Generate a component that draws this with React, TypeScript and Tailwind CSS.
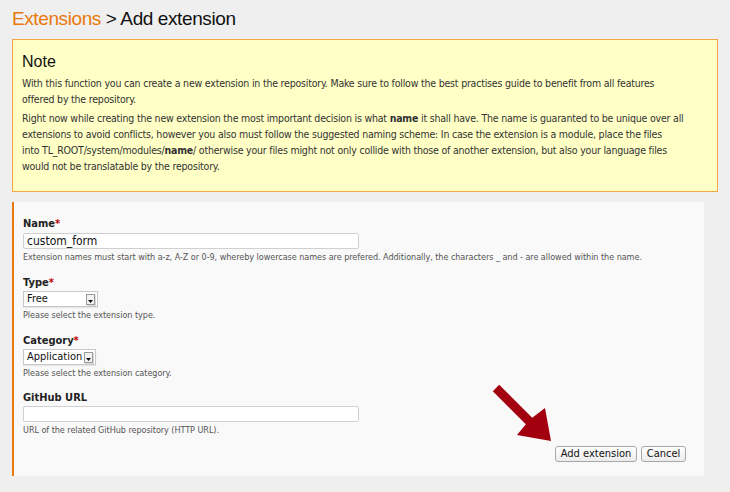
import React from 'react';

const Req = () => <span className="text-[#c00000]">*</span>;

const FakeSelect: React.FC<{ value: string; width: string }> = ({ value, width }) => (
  <div className={`${width} h-[16px] flex items-center justify-between bg-white border border-[#c9c9c9] shadow-[0_1px_1px_rgba(0,0,0,0.08)] pl-[3px] pr-[2px] text-[11px] leading-[14px] text-[#111]`}>
    <span>{value}</span>
    <span className="w-[9px] h-[11px] flex items-end justify-center border border-[#9a9a9a] bg-[#f2f2f2] pb-[1px] shadow-[1px_1px_0_rgba(0,0,0,0.15)]">
      <svg width="5" height="3" viewBox="0 0 5 3"><path d="M0 0h5L2.5 3z" fill="#111" /></svg>
    </span>
  </div>
);

const Label: React.FC<{ className?: string; children: React.ReactNode }> = ({ className = '', children }) => (
  <div className={`text-[11px] leading-[14px] font-bold text-[#222] ${className}`}>{children}</div>
);

const Hint: React.FC<{ children: React.ReactNode }> = ({ children }) => (
  <p className="mt-[1px] text-[9px] leading-[14px] tracking-[-0.05px] text-[#555] whitespace-nowrap">{children}</p>
);

export default function App() {
  return (
    <div className="w-[730px] h-[492px] overflow-hidden bg-[#efefef] text-[#333] [font-family:'DejaVu_Sans',sans-serif] [font-stretch:condensed]">
      <h1 className="pl-[12px] pt-[7px] h-[39px] text-[19px] leading-[24px] tracking-[-0.4px] [font-family:'Liberation_Sans',sans-serif] [font-stretch:normal] text-[#111]">
        <span className="text-[#e8790c]">Extensions</span> &gt; Add extension
      </h1>

      <div className="ml-[12px] w-[706px] h-[153px] border border-[#f2a742] bg-[#ffffc6] pl-[9px] pr-[9px] pt-[12px]">
        <h2 className="text-[16px] leading-[20px] text-[#111] mb-[3px] [font-family:'Liberation_Sans',sans-serif] [font-stretch:normal]">Note</h2>
        <p className="text-[10.5px] leading-[16px] tracking-[-0.2px] mb-[3px] whitespace-nowrap">
          With this function you can create a new extension in the repository. Make sure to follow the best practises guide to benefit from all features
          <br />
          offered by the repository.
        </p>
        <p className="text-[10.5px] leading-[16px] tracking-[-0.2px] whitespace-nowrap">
          Right now while creating the new extension the most important decision is what <b>name</b> it shall have. The name is guaranted to be unique over all
          <br />
          extensions to avoid conflicts, however you also must follow the suggested naming scheme: In case the extension is a module, place the files
          <br />
          into TL_ROOT/system/modules/<b>name</b>/ otherwise your files might not only collide with those of another extension, but also your language files
          <br />
          would not be translatable by the repository.
        </p>
      </div>

      <div className="relative mt-[10px] ml-[12px] w-[692px] h-[274px] bg-[#f9f9f9] border-l-2 border-[#e8790c] pl-[9px] pr-[9px] pt-[15px]">
        <Label>Name<Req /></Label>
        <div className="mt-[2px] w-[336px] h-[16px] bg-white border border-[#d0d0d0] rounded-[2px] px-[3px] text-[12px] leading-[14px] text-[#111]">custom_form</div>
        <Hint>Extension names must start with a-z, A-Z or 0-9, whereby lowercase names are prefered. Additionally, the characters _ and - are allowed within the name.</Hint>

        <Label className="mt-[12px]">Type<Req /></Label>
        <div className="mt-[1px]"><FakeSelect value="Free" width="w-[75px]" /></div>
        <Hint>Please select the extension type.</Hint>

        <Label className="mt-[12px]">Category<Req /></Label>
        <div className="mt-[1px]"><FakeSelect value="Application" width="w-[73px]" /></div>
        <Hint>Please select the extension category.</Hint>

        <Label className="mt-[11px]">GitHub URL</Label>
        <div className="mt-[1px] w-[336px] h-[16px] bg-white border border-[#d0d0d0] rounded-[2px]" />
        <Hint>URL of the related GitHub repository (HTTP URL).</Hint>

        <div className="mt-[9px] flex justify-end gap-[4px] pr-[9px]">
          <button className="w-[82px] h-[16px] rounded-[3px] border border-[#a8a8a8] bg-gradient-to-b from-white to-[#ececec] text-[11px] leading-[14px] text-[#111]">Add extension</button>
          <button className="w-[45px] h-[16px] rounded-[3px] border border-[#a8a8a8] bg-gradient-to-b from-white to-[#ececec] text-[11px] leading-[14px] text-[#111]">Cancel</button>
        </div>

        <svg className="absolute left-[476px] top-[180px]" width="64" height="62" viewBox="0 0 64 62">
          <path d="M2.8 9.2 L9.2 2.8 L42.2 35.8 L55 26 L61 59 L27 53 L35.8 42.2 Z" fill="#a3000f" />
        </svg>
      </div>
    </div>
  );
}
